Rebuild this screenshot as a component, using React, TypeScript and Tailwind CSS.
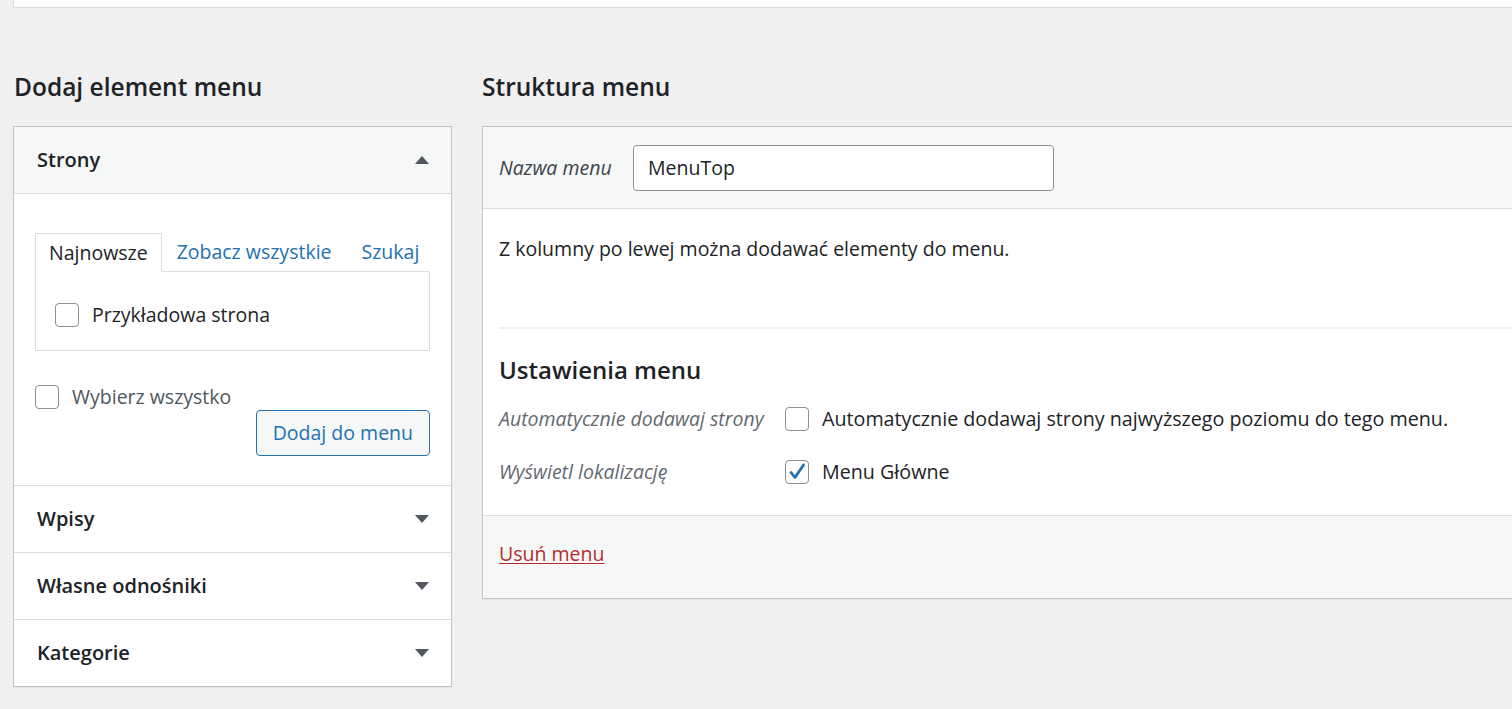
import React from "react";

const font = { fontFamily: '"Open Sans", "Noto Sans", sans-serif' };

function Arrow({ up }: { up?: boolean }) {
  return (
    <svg width="14" height="8" viewBox="0 0 14 8" className="shrink-0">
      {up ? (
        <path d="M7 0 L14 8 L0 8 Z" fill="#50575e" />
      ) : (
        <path d="M0 0 L14 0 L7 8 Z" fill="#50575e" />
      )}
    </svg>
  );
}

function Checkbox({ checked }: { checked?: boolean }) {
  return (
    <span className="flex h-6 w-6 shrink-0 items-center justify-center rounded-[4px] border border-[#8c8f94] bg-white">
      {checked && (
        <svg width="20" height="20" viewBox="0 0 20 20">
          <path d="M4 10.5 L8 15.5 L16.5 3" fill="none" stroke="#2271b1" strokeWidth="2.8" strokeLinecap="round" strokeLinejoin="round" />
        </svg>
      )}
    </span>
  );
}

function SectionRow({ title }: { title: string }) {
  return (
    <div className="flex h-[67px] items-center justify-between border-t border-[#dcdcde] bg-white pl-[23px] pr-[22px]">
      <h3 className="text-[20px] font-semibold text-[#1d2327]">{title}</h3>
      <Arrow />
    </div>
  );
}

export default function App() {
  return (
    <div className="min-h-[709px] w-full overflow-hidden bg-[#f0f0f1] text-[#1d2327]" style={font}>
      <div className="pl-[13px]">
        <div className="h-[8px] border-b border-l border-[#dcdcde] bg-[#fcfcfc]" />
      </div>

      <div className="flex gap-[30px] pl-[13px] pt-[60px]">
        {/* lewa kolumna */}
        <div className="w-[439px] shrink-0">
          <h2 className="mb-[20px] h-[38px] pl-px text-[24.5px] font-semibold leading-[38px]">Dodaj element menu</h2>
          <div className="border border-[#c3c4c7] shadow-[0_1px_1px_rgba(0,0,0,0.04)]">
            <div className="flex h-[67px] items-center justify-between border-b border-[#dcdcde] bg-[#f6f7f7] pl-[23px] pr-[22px]">
              <h3 className="text-[20px] font-semibold">Strony</h3>
              <Arrow up />
            </div>
            <div className="bg-white px-[21px] pb-[29px] pt-[38px]">
              <div className="flex h-[39px] items-end text-[19.5px]">
                <div className="relative z-10 -mb-px flex h-[39px] items-center border border-b-0 border-[#dcdcde] bg-white px-[13px]">
                  Najnowsze
                </div>
                <span className="flex h-[38px] items-center pl-[15px] text-[#2271b1]">Zobacz wszystkie</span>
                <span className="flex h-[38px] items-center pl-[30px] text-[#2271b1]">Szukaj</span>
              </div>
              <div className="h-[80px] border border-[#dcdcde] pl-[19px] pt-[31px] text-[19.5px]">
                <div className="flex h-6 items-center gap-[13px]">
                  <Checkbox />
                  <span>Przykładowa strona</span>
                </div>
              </div>
              <div className="mt-[31px] flex h-[29px] items-center gap-[13px] text-[19.5px]">
                <Checkbox />
                <span className="text-[#50575e]">Wybierz wszystko</span>
              </div>
              <div className="-mt-px flex justify-end">
                <button className="h-[46px] rounded-[4px] border border-[#2271b1] bg-[#f6f7f7] px-[16px] text-[19.5px] text-[#2271b1]">
                  Dodaj do menu
                </button>
              </div>
            </div>
            <SectionRow title="Wpisy" />
            <SectionRow title="Własne odnośniki" />
            <SectionRow title="Kategorie" />
          </div>
        </div>

        {/* prawa kolumna */}
        <div className="w-[1100px] shrink-0">
          <h2 className="mb-[20px] h-[38px] text-[24.5px] font-semibold leading-[38px]">Struktura menu</h2>
          <div className="border border-[#c3c4c7] shadow-[0_1px_1px_rgba(0,0,0,0.04)]">
            <div className="flex h-[82px] items-center border-b border-[#dcdcde] bg-[#f6f7f7] pl-[16px]">
              <span className="w-[134px] text-[19.5px] italic text-[#3c434a]">Nazwa menu</span>
              <div className="flex h-[46px] w-[421px] items-center rounded-[4px] border border-[#8c8f94] bg-white px-[14px] text-[19.5px]">
                MenuTop
              </div>
            </div>
            <div className="bg-white pl-[16px]">
              <p className="pt-[26px] text-[19.5px] leading-[28px]">Z kolumny po lewej można dodawać elementy do menu.</p>
              <div className="mt-[64px] border-t-2 border-[#f0f0f1]" />
              <h3 className="mt-[25px] text-[24px] font-semibold leading-[32px]">Ustawienia menu</h3>
              <div className="flex h-[49px] items-center pt-[16px]">
                <span className="w-[286px] text-[19.5px] italic text-[#646970]">Automatycznie dodawaj strony</span>
                <Checkbox />
                <span className="ml-[13px] text-[19.7px]">Automatycznie dodawaj strony najwyższego poziomu do tego menu.</span>
              </div>
              <div className="flex h-[60px] items-center pb-[2px] pt-[16px]">
                <span className="w-[286px] text-[19.5px] italic text-[#646970]">Wyświetl lokalizację</span>
                <Checkbox checked />
                <span className="ml-[13px] text-[19.7px]">Menu Główne</span>
              </div>
              <div className="h-[20px]" />
            </div>
            <div className="h-[83px] border-t border-[#dcdcde] bg-[#f6f7f7] pl-[16px] pt-[23px]">
              <a className="text-[19.5px] leading-[30px] text-[#b32d2e] underline underline-offset-2">Usuń menu</a>
            </div>
          </div>
        </div>
      </div>
    </div>
  );
}
